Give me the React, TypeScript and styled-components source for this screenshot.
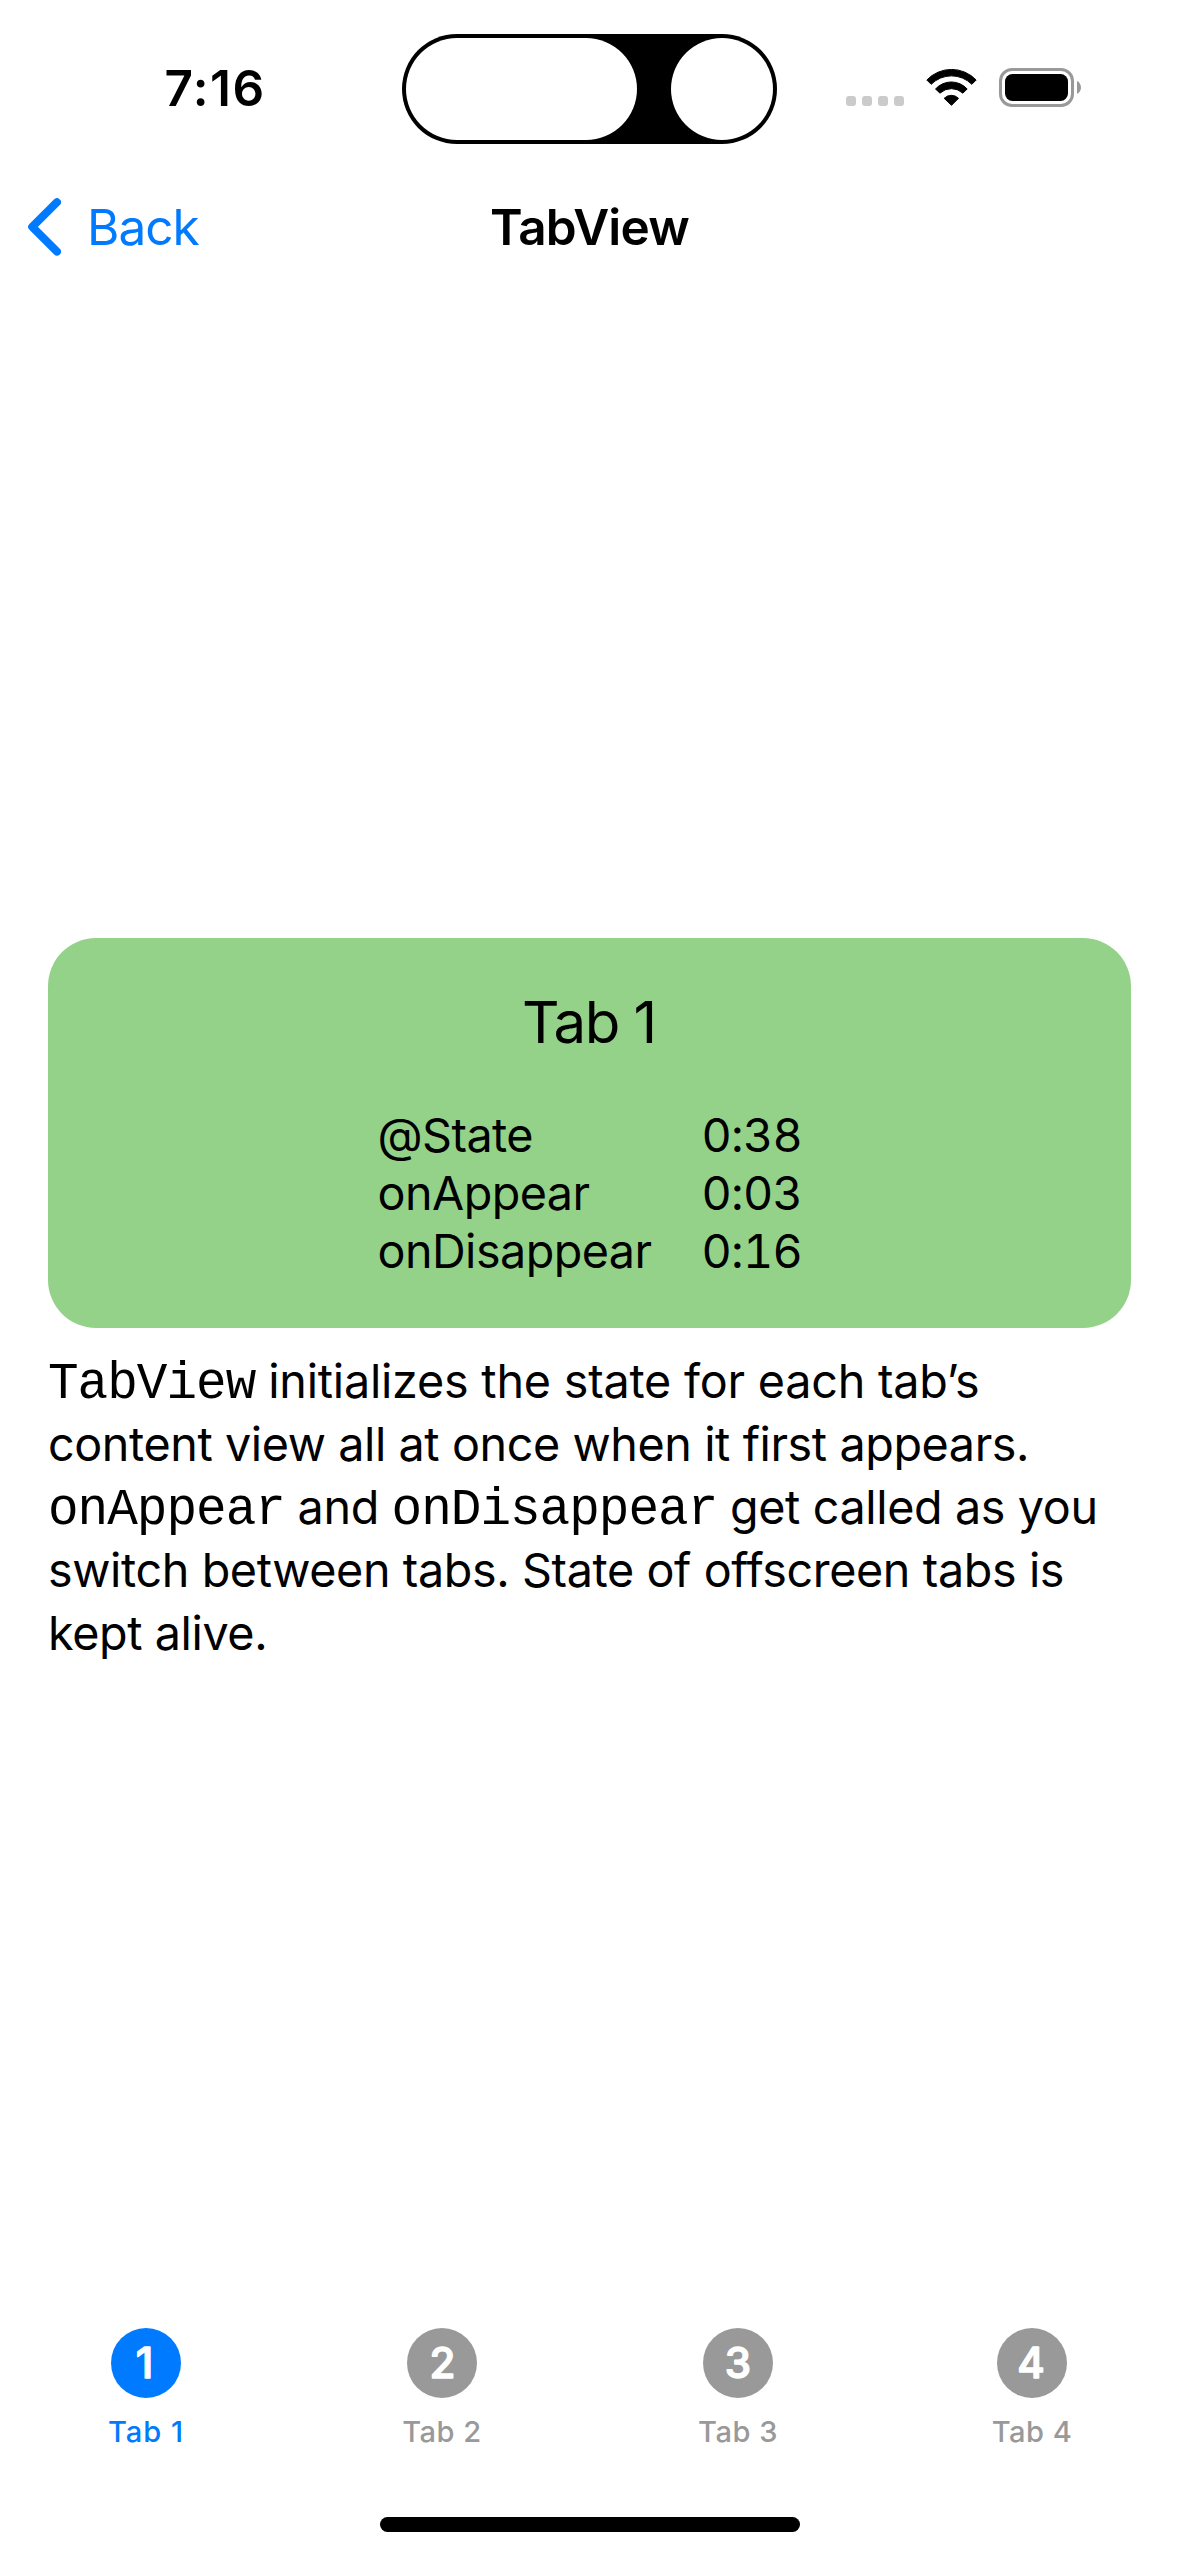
import React from "react";
import styled, { createGlobalStyle } from "styled-components";

const SANS = 'Inter, "Liberation Sans", sans-serif';
const MONO = '"Liberation Mono", monospace';

const GlobalStyle = createGlobalStyle`
  body { margin: 0; background: #fff; }
  * { box-sizing: border-box; }
`;

const Screen = styled.div`
  display: flex;
  flex-direction: column;
  width: 1179px;
  height: 2556px;
  overflow: hidden;
  background: #fff;
  color: #000;
  font-family: ${SANS};
  font-size: 46.7px;
  white-space: nowrap;
`;

const StatusBar = styled.div`
  display: grid;
  grid-template-columns: 402px 375px 402px;
  height: 162px;
  padding-top: 16px;
  align-items: center;
`;

const Time = styled.div`
  justify-self: center;
  padding: 0 0 2px 28px;
  font-size: 49.5px;
  font-weight: 600;
  letter-spacing: 1.5px;
  line-height: 60px;
`;

const Island = styled.div`
  display: flex;
  justify-content: space-between;
  height: 110px;
  padding: 4px;
  border-radius: 55px;
  background: #000;
`;

const IslandCutout = styled.div<{ $width: number }>`
  width: ${(p) => p.$width}px;
  height: 102px;
  border-radius: 51px;
  background: #fff;
`;

const StatusIcons = styled.div`
  display: flex;
  align-items: center;
  padding: 0 0 3px 69px;
`;

const SignalDots = styled.div`
  display: flex;
  gap: 6px;
  margin-top: 27px;
`;

const SignalDot = styled.div`
  width: 10px;
  height: 10px;
  border-radius: 3px;
  background: #cbcbcb;
`;

const WifiIcon = styled.svg`
  width: 51px;
  height: 37px;
  margin-left: 22px;
`;

const BatteryIcon = styled.svg`
  width: 83px;
  height: 39px;
  margin-left: 22px;
`;

const NavBar = styled.div`
  display: grid;
  grid-template-columns: 1fr auto 1fr;
  align-items: center;
  height: 130px;
  padding: 0 28px;
`;

const BackButton = styled.div`
  display: flex;
  align-items: center;
  gap: 26px;
  color: #007aff;
  font-size: 49.5px;
  letter-spacing: -1px;
  line-height: 60px;
`;

const Chevron = styled.svg`
  width: 33px;
  height: 58px;
`;

const NavTitle = styled.div`
  font-size: 49.5px;
  font-weight: 600;
  letter-spacing: -0.78px;
  line-height: 60px;
`;

const Content = styled.main`
  flex: 1;
  display: flex;
  flex-direction: column;
  gap: 22px;
  padding: 646px 48px 0;
`;

const Card = styled.section`
  display: flex;
  flex-direction: column;
  align-items: center;
  gap: 48px;
  padding: 48px;
  border-radius: 48px;
  background: #95d289;
`;

const CardTitle = styled.div`
  padding-right: 1.5px;
  font-size: 58.2px;
  letter-spacing: -1.6px;
  line-height: 72px;
`;

const Timings = styled.div`
  display: grid;
  grid-template-columns: 324px 100px;
  line-height: 58px;
`;

const TimingName = styled.div`
  letter-spacing: -0.55px;
`;

const TimingValue = styled.div`
  font-variant-numeric: tabular-nums;
  letter-spacing: -0.7px;
`;

const Description = styled.div`
  display: flex;
  flex-direction: column;
  line-height: 63px;
`;

const Line = styled.div<{ $tracking: number }>`
  letter-spacing: ${(p) => p.$tracking}px;
  white-space: pre;
`;

const Code = styled.code`
  font-family: ${MONO};
  font-size: 51px;
  letter-spacing: -1px;
  line-height: 0;
`;

const TabBar = styled.nav`
  display: grid;
  grid-template-columns: 296px 296px 296px 292px;
  height: 189px;
  margin-left: -2px;
`;

const TabItem = styled.div<{ $active?: boolean }>`
  display: flex;
  flex-direction: column;
  align-items: center;
  color: ${(p) => (p.$active ? "#007aff" : "#999")};
`;

const TabIcon = styled.svg`
  width: 70px;
  height: 70px;
`;

const TabNumber = styled.text`
  fill: #fff;
  stroke: #fff;
  stroke-width: 1.4px;
  stroke-linejoin: round;
  font-family: ${SANS};
  font-size: 42px;
  font-weight: 500;
  text-anchor: middle;
`;

const TabLabel = styled.div<{ $tracking: number }>`
  margin-top: 16px;
  font-size: 29.1px;
  font-weight: 500;
  letter-spacing: ${(p) => p.$tracking}px;
  line-height: 36px;
`;

const HomeArea = styled.div`
  display: flex;
  justify-content: center;
  height: 39px;
`;

const HomeIndicator = styled.div`
  width: 420px;
  height: 15px;
  border-radius: 7.5px;
  background: #000;
`;

const timings = [
  { name: "@State", value: "0:38" },
  { name: "onAppear", value: "0:03" },
  { name: "onDisappear", value: "0:16" },
];

const tabs = [
  { n: 1, digitX: 33.5, tracking: 0.95 },
  { n: 2, digitX: 35.5, tracking: 0.5 },
  { n: 3, digitX: 35, tracking: 0.5 },
  { n: 4, digitX: 34, tracking: 0.5 },
];

export default function App() {
  return (
    <>
      <GlobalStyle />
      <Screen>
        <StatusBar>
          <Time>7:16</Time>
          <Island>
            <IslandCutout $width={231} />
            <IslandCutout $width={102} />
          </Island>
          <StatusIcons>
            <SignalDots>
              <SignalDot />
              <SignalDot />
              <SignalDot />
              <SignalDot />
            </SignalDots>
            <WifiIcon viewBox="408.5 147 153 111">
              <g stroke="#000" strokeWidth="3" strokeLinejoin="round">
                <path d="M411 180A102 102 0 0 1 559 180L546 193A86 86 0 0 0 424 193Z" />
                <path d="M437 207A64 64 0 0 1 532 207L519 219.5A50 50 0 0 0 450.5 219.5Z" />
                <path d="M463 235A30 30 0 0 1 506 235L485 256Z" />
              </g>
            </WifiIcon>
            <BatteryIcon viewBox="0 0 83 39">
              <rect x="1.5" y="1.5" width="72" height="36" rx="11.5" fill="none" stroke="#999" strokeWidth="3" />
              <rect x="6" y="6" width="63" height="27" rx="7.5" />
              <path d="M78 13C83.3 15.3 83.3 23.7 78 26Z" fill="#999" />
            </BatteryIcon>
          </StatusIcons>
        </StatusBar>
        <NavBar>
          <BackButton>
            <Chevron viewBox="0 0 33 58" fill="none">
              <path
                d="M29 4.2L4.2 28.8L29 53.6"
                stroke="#007aff"
                strokeWidth="8"
                strokeLinecap="round"
                strokeLinejoin="round"
              />
            </Chevron>
            Back
          </BackButton>
          <NavTitle>TabView</NavTitle>
        </NavBar>
        <Content>
          <Card>
            <CardTitle>Tab 1</CardTitle>
            <Timings>
              {timings.map(({ name, value }) => (
                <React.Fragment key={name}>
                  <TimingName>{name}</TimingName>
                  <TimingValue>{value}</TimingValue>
                </React.Fragment>
              ))}
            </Timings>
          </Card>
          <Description>
            <Line $tracking={-0.21}>
              <Code>TabView</Code> initializes the state for each tab’s
            </Line>
            <Line $tracking={-0.41}>content view all at once when it first appears.</Line>
            <Line $tracking={-0.38}>
              <Code>onAppear</Code> and <Code>onDisappear</Code> get called as you
            </Line>
            <Line $tracking={-0.39}>switch between tabs. State of offscreen tabs is</Line>
            <Line $tracking={-0.4}>kept alive.</Line>
          </Description>
        </Content>
        <TabBar>
          {tabs.map(({ n, digitX, tracking }) => (
            <TabItem key={n} $active={n === 1}>
              <TabIcon viewBox="0 0 70 70">
                <circle cx="35" cy="35" r="35" fill="currentColor" />
                <TabNumber x={digitX} y="50.3">
                  {n}
                </TabNumber>
              </TabIcon>
              <TabLabel $tracking={tracking}>{`Tab ${n}`}</TabLabel>
            </TabItem>
          ))}
        </TabBar>
        <HomeArea>
          <HomeIndicator />
        </HomeArea>
      </Screen>
    </>
  );
}
